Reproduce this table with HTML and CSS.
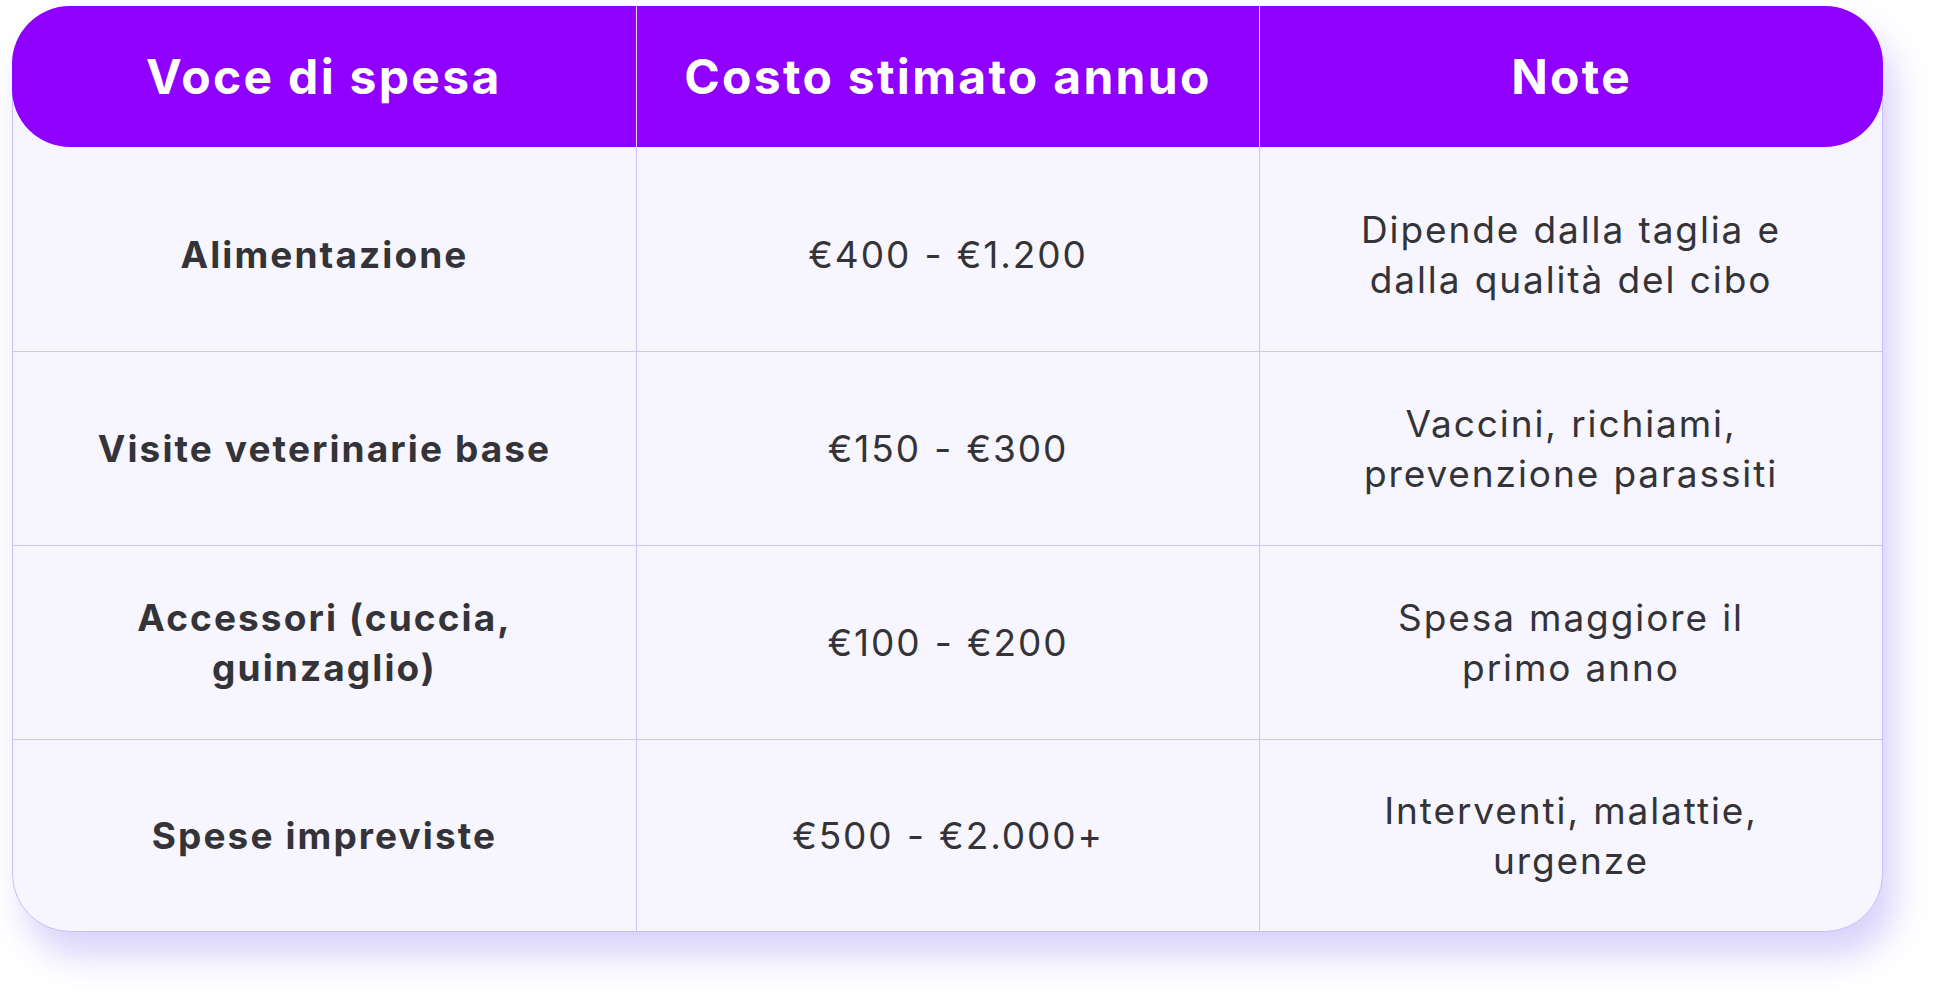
FILE: index.html
```html
<!DOCTYPE html>
<html lang="it">
<head>
<meta charset="utf-8">
<title>Costi annui</title>
<link rel="stylesheet" href="styles.css">
</head>
<body>
<div class="page">
  <div class="card">
    <div class="head">
      <div class="hcell">Voce di spesa</div>
      <div class="hcell">Costo stimato annuo</div>
      <div class="hcell">Note</div>
    </div>
    <div class="row first">
      <div class="cell name">Alimentazione</div>
      <div class="cell">€400 - €1.200</div>
      <div class="cell">Dipende dalla taglia e<br>dalla qualità del cibo</div>
    </div>
    <div class="row">
      <div class="cell name">Visite veterinarie base</div>
      <div class="cell">€150 - €300</div>
      <div class="cell">Vaccini, richiami,<br>prevenzione parassiti</div>
    </div>
    <div class="row">
      <div class="cell name">Accessori (cuccia,<br>guinzaglio)</div>
      <div class="cell">€100 - €200</div>
      <div class="cell">Spesa maggiore il<br>primo anno</div>
    </div>
    <div class="row last">
      <div class="cell name">Spese impreviste</div>
      <div class="cell">€500 - €2.000+</div>
      <div class="cell">Interventi, malattie,<br>urgenze</div>
    </div>
  </div>
</div>
</body>
</html>
```
FILE: styles.css
```css
html, body {
  margin: 0;
  padding: 0;
  background: #ffffff;
}

body {
  font-family: Inter, "Open Sans", "Liberation Sans", sans-serif;
  color: #333338;
  min-height: 991px;
}

.page {
  padding: 6px 0 58px 12px;
}

.card {
  width: 1869px;
  height: 924px;
  border: 1px solid #c8bdff;
  border-radius: 58px;
  background: #f7f5fe;
  box-shadow: 12px 24px 34px rgba(110, 80, 235, 0.26);
  display: grid;
  grid-template-rows: 140px 205px 194px 194px 1fr;
}

.head {
  margin: -1px -1px 0 -1px;
  height: 141px;
  background: #8f00ff;
  border-radius: 58px;
  display: grid;
  grid-template-columns: repeat(3, 1fr);
}

.hcell {
  display: flex;
  align-items: center;
  justify-content: center;
  color: #ffffff;
  font-weight: 700;
  font-size: 48px;
  letter-spacing: 2.3px;
  word-spacing: 0;
}

.hcell + .hcell {
  border-left: 1px solid rgba(255, 255, 255, 0.85);
}

.row {
  display: grid;
  grid-template-columns: repeat(3, 1fr);
  border-bottom: 1px solid #cfc6ff;
}

.row.last {
  border-bottom: none;
}

.cell {
  display: flex;
  align-items: center;
  justify-content: center;
  text-align: center;
  font-size: 37px;
  line-height: 50px;
  font-weight: 400;
  letter-spacing: 1.9px;
  word-spacing: 1px;
  white-space: nowrap;
}

.row.first .cell {
  padding-top: 12px;
}

.cell + .cell {
  border-left: 1px solid #cfc6ff;
}

.cell.name {
  font-weight: 700;
  letter-spacing: 2.1px;
  word-spacing: 0;
}
```
